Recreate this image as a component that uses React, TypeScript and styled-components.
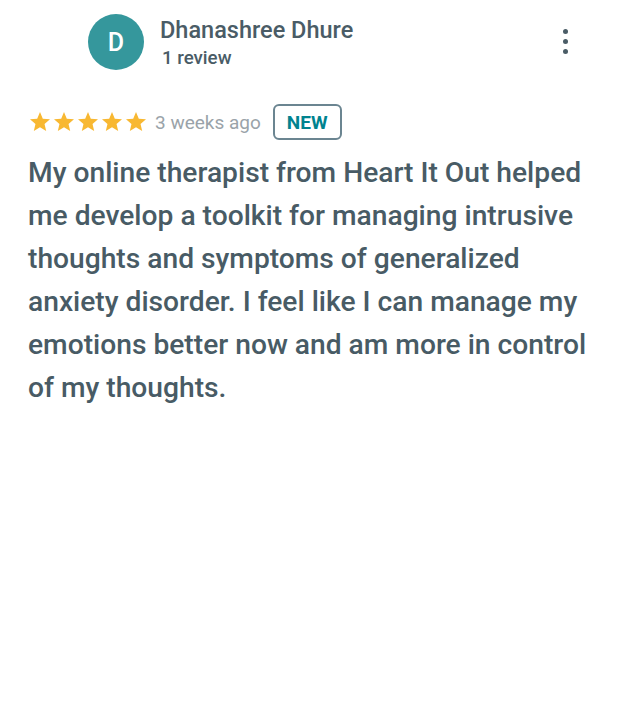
import React from "react";
import styled, { createGlobalStyle } from "styled-components";

const Global = createGlobalStyle`
  html, body { margin: 0; padding: 0; background: #fff; }
  body { font-family: Roboto, "Noto Sans", Arial, sans-serif; }
`;

const Card = styled.div`
  width: 622px;
  box-sizing: border-box;
  padding: 14px 0 0 28px;
  display: flex;
  flex-direction: column;
`;

const Header = styled.div`
  display: flex;
  align-items: center;
  padding-left: 60px;
  padding-right: 54px;
`;

const Avatar = styled.div`
  width: 56px;
  height: 56px;
  border-radius: 50%;
  background: #35979c;
  color: #fff;
  display: flex;
  align-items: center;
  justify-content: center;
  font-size: 25px;
  font-weight: 500;
  flex: none;
`;

const Who = styled.div`
  display: flex;
  flex-direction: column;
  margin-left: 16px;
  flex: 1;
  margin-top: 1px;
`;

const Name = styled.div`
  font-size: 23.5px;
  font-weight: 500;
  color: #4a5c66;
  line-height: 28px;
`;

const Count = styled.div`
  font-size: 18.7px;
  font-weight: 500;
  color: #4a5c66;
  line-height: 24px;
  margin: 2px 0 0 2px;
`;

const Kebab = styled.div`
  display: flex;
  flex-direction: column;
  gap: 5px;
  align-items: center;
  margin-top: -2px;
`;

const Dot = styled.span`
  width: 5px;
  height: 5px;
  border-radius: 50%;
  background: #4a5c66;
`;

const Meta = styled.div`
  display: flex;
  align-items: center;
  margin-top: 34px;
`;

const Stars = styled.div`
  display: flex;
`;

const Ago = styled.span`
  font-size: 19px;
  color: #9aa3a9;
  margin-left: 7px;
`;

const Badge = styled.span`
  margin-left: 12px;
  height: 36px;
  box-sizing: border-box;
  padding: 0 12px;
  border: 2px solid #6b8591;
  border-radius: 6px;
  display: flex;
  align-items: center;
  font-size: 19px;
  font-weight: 700;
  color: #00838f;
`;

const Body = styled.p`
  margin: 11px 0 0;
  font-size: 28.2px;
  font-weight: 500;
  line-height: 43px;
  color: #485b65;
  max-width: 570px;
`;

const Star = () => (
  <svg width="24" height="24" viewBox="0 0 24 24">
    <path
      fill="#f8b832"
      d="M12 17.27L18.18 21l-1.64-7.03L22 9.24l-7.19-.61L12 2 9.19 8.63 2 9.24l5.46 4.73L5.82 21z"
    />
  </svg>
);

export default function App() {
  return (
    <>
      <Global />
      <Card>
        <Header>
          <Avatar>D</Avatar>
          <Who>
            <Name>Dhanashree Dhure</Name>
            <Count>1 review</Count>
          </Who>
          <Kebab>
            <Dot />
            <Dot />
            <Dot />
          </Kebab>
        </Header>
        <Meta>
          <Stars>
            {[0, 1, 2, 3, 4].map((i) => (
              <Star key={i} />
            ))}
          </Stars>
          <Ago>3 weeks ago</Ago>
          <Badge>NEW</Badge>
        </Meta>
        <Body>
          My online therapist from Heart It Out helped me develop a toolkit for
          managing intrusive thoughts and symptoms of generalized anxiety
          disorder. I feel like I can manage my emotions better now and am more
          in control of my thoughts.
        </Body>
      </Card>
    </>
  );
}
